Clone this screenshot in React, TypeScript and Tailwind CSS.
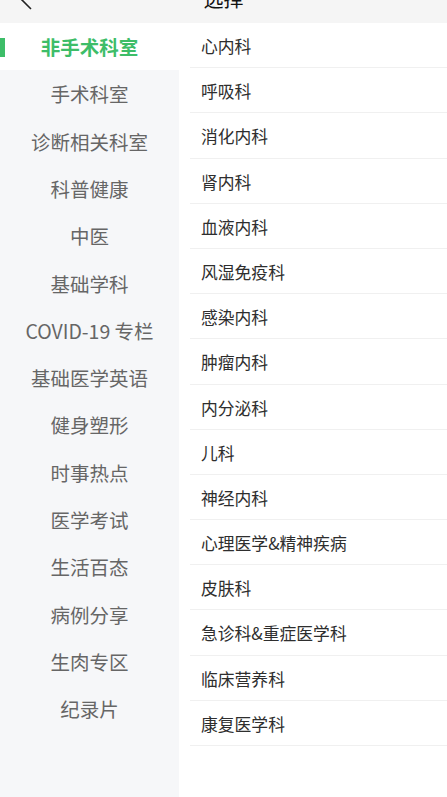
const sideItems = [
  "非手术科室",
  "手术科室",
  "诊断相关科室",
  "科普健康",
  "中医",
  "基础学科",
  "COVID-19 专栏",
  "基础医学英语",
  "健身塑形",
  "时事热点",
  "医学考试",
  "生活百态",
  "病例分享",
  "生肉专区",
  "纪录片",
];

const depts = [
  "心内科",
  "呼吸科",
  "消化内科",
  "肾内科",
  "血液内科",
  "风湿免疫科",
  "感染内科",
  "肿瘤内科",
  "内分泌科",
  "儿科",
  "神经内科",
  "心理医学&精神疾病",
  "皮肤科",
  "急诊科&重症医学科",
  "临床营养科",
  "康复医学科",
];

export default function App() {
  const active = 0;

  return (
    <div
      className="flex h-[797px] w-[447px] flex-col overflow-hidden bg-white"
      style={{ fontFamily: '"Noto Sans CJK SC", "Noto Sans", sans-serif' }}
    >
      {/* header, scrolled half out of view */}
      <div className="h-[23px] shrink-0 overflow-hidden bg-[#f5f5f5]">
        <div className="relative -mt-[24px] flex h-[46px] items-center justify-center">
          <svg
            className="absolute left-[18px] top-[11px]"
            width="16"
            height="24"
            viewBox="0 0 16 24"
            fill="none"
            stroke="#222"
            strokeWidth="1.6"
          >
            <path d="M13 2 L3 12 L13 22" />
          </svg>
          <span className="text-[20px] leading-none text-[#111]">选择</span>
        </div>
      </div>

      <div className="flex flex-1 overflow-hidden">
        {/* category sidebar */}
        <div className="w-[179px] shrink-0 bg-[#f6f7f9]">
          {sideItems.map((name, i) => (
            <div
              key={name}
              className={`relative flex h-[47.3px] items-center justify-center text-[19.5px] ${
                i === active ? "bg-white font-bold text-[#3dbd68]" : "text-[#666]"
              }`}
            >
              {i === active && (
                <span className="absolute left-0 top-[15px] h-[19px] w-[5px] bg-[#3dbd68]" />
              )}
              {name}
            </div>
          ))}
        </div>

        {/* department list */}
        <div className="flex-1 pl-[11px]">
          {depts.map((d) => (
            <div
              key={d}
              className="flex h-[45.2px] items-center border-b border-[#f0f0f0] pl-[11px] pt-[3px] text-[16.8px] text-[#2e2e2e]"
            >
              {d}
            </div>
          ))}
        </div>
      </div>
    </div>
  );
}
